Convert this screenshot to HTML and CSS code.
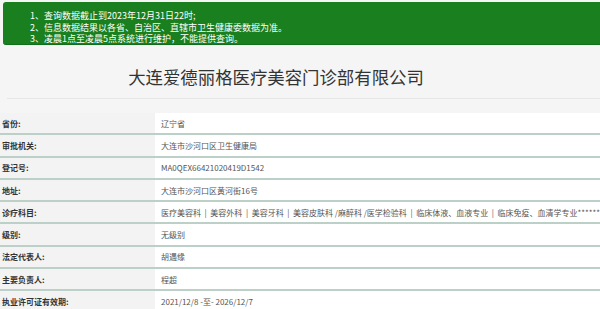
FILE: index.html
```html
<!DOCTYPE html>
<html lang="zh-CN">
<head>
    <meta charset="UTF-8">
    <title>大连爱德丽格医疗美容门诊部有限公司</title>
    <link rel="stylesheet" href="styles.css">
</head>
<body>
    <div class="notice">
        <p>1、查询数据截止到2023年12月31日22时;</p>
        <p>2、信息数据结果以各省、自治区、直辖市卫生健康委数据为准。</p>
        <p>3、凌晨1点至凌晨5点系统进行维护，不能提供查询。</p>
    </div>

    <h1 class="title">大连爱德丽格医疗美容门诊部有限公司</h1>

    <table class="info">
        <tr><th>省份:</th><td>辽宁省</td></tr>
        <tr><th>审批机关:</th><td>大连市沙河口区卫生健康局</td></tr>
        <tr><th>登记号:</th><td>MA0QEX66421020419D1542</td></tr>
        <tr><th>地址:</th><td>大连市沙河口区黄河街16号</td></tr>
        <tr><th>诊疗科目:</th><td>医疗美容科 &nbsp;|&nbsp; 美容外科 &nbsp;|&nbsp; 美容牙科 &nbsp;|&nbsp; 美容皮肤科 /麻醉科 /医学检验科 &nbsp;|&nbsp; 临床体液、血液专业 &nbsp;|&nbsp; 临床免疫、血清学专业******</td></tr>
        <tr><th>级别:</th><td>无级别</td></tr>
        <tr><th>法定代表人:</th><td>胡遇缘</td></tr>
        <tr><th>主要负责人:</th><td>程超</td></tr>
        <tr><th>执业许可证有效期:</th><td>2021/12/8 -至- 2026/12/7</td></tr>
    </table>
</body>
</html>
```

FILE: styles.css
```css
body {
    margin: 0;
    background-color: #f5f5f5;
    font-family: "Noto Sans CJK SC", "Noto Sans", sans-serif;
    overflow: hidden;
}

.notice {
    margin: 2px 0 0 3px;
    height: 43px;
    box-sizing: border-box;
    padding: 8px 0 0 27px;
    background-color: #1a7f1e;
    border-bottom: 1px solid #10701a;
    border-radius: 3px 0 0 3px;
    color: #fff;
    font-size: 9px;
}

.notice p {
    margin: 0;
    line-height: 11.5px;
}

.title {
    margin: 0 0 0 7px;
    padding: 21px 55px 10px 0;
    border-bottom: 1px solid #e6e6e6;
    text-align: center;
    font-size: 17.4px;
    font-weight: normal;
    color: #333;
    line-height: 22px;
}

.info {
    width: 100%;
    margin-top: 14px;
    border-collapse: collapse;
    table-layout: fixed;
}

.info tr {
    border-bottom: 2px solid #bdd0c8;
}

.info th {
    width: 153px;
    height: 20.3px;
    padding: 0 0 0 2px;
    text-align: left;
    font-size: 8px;
    font-weight: bold;
    color: #333;
    background-color: #f3f3f3;
}

.info td {
    height: 20.3px;
    padding: 0 0 0 6px;
    font-size: 8px;
    color: #555;
    background-color: #fff;
    white-space: nowrap;
    overflow: hidden;
}
```
